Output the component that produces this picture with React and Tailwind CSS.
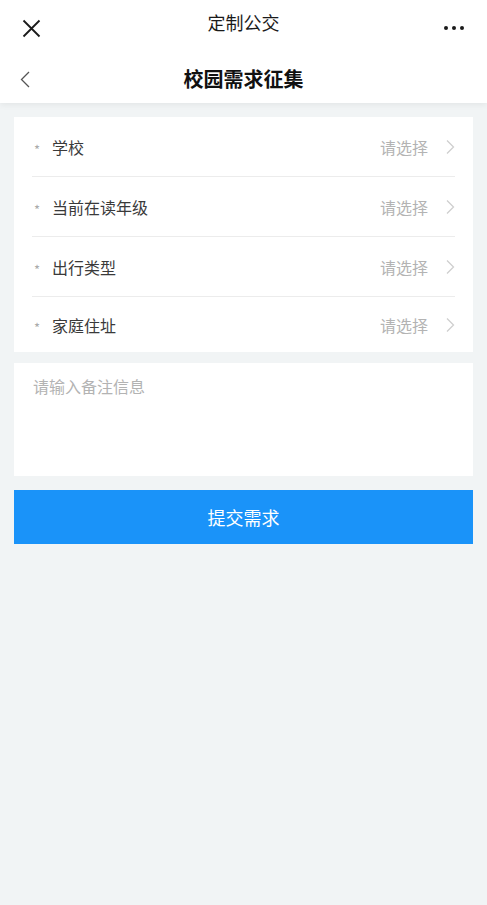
import React from 'react';

const fields = ['学校', '当前在读年级', '出行类型', '家庭住址'];

const ChevronRight = () => (
  <svg width="10" height="16" viewBox="0 0 10 16" fill="none" stroke="#cfcfcf" strokeWidth="1.3">
    <path d="M2 1.5 L8.5 8 L2 14.5" />
  </svg>
);

export default function App() {
  return (
    <div
      className="min-h-[905px] bg-[#f1f4f5] text-[#333]"
      style={{ fontFamily: '"Noto Sans CJK SC", "Noto Sans", sans-serif' }}
    >
      {/* Header */}
      <div className="bg-white shadow-[0_2px_6px_rgba(0,0,0,0.06)]">
        <div className="grid grid-cols-[1fr_auto_1fr] h-[56px] px-[22px]">
          <div className="flex items-center">
            <svg width="19" height="19" viewBox="0 0 19 19" stroke="#1a1a1a" strokeWidth="1.8">
              <path d="M1.5 1.5 L17.5 17.5 M17.5 1.5 L1.5 17.5" />
            </svg>
          </div>
          <div className="pt-[9px] text-[18px] leading-[26px] text-[#1a1a1a]">定制公交</div>
          <div className="flex items-center justify-end">
            <div className="flex gap-[4px] mr-[1px]">
              <span className="w-[4px] h-[4px] rounded-full bg-[#1a1a1a]" />
              <span className="w-[4px] h-[4px] rounded-full bg-[#1a1a1a]" />
              <span className="w-[4px] h-[4px] rounded-full bg-[#1a1a1a]" />
            </div>
          </div>
        </div>
        <div className="grid grid-cols-[1fr_auto_1fr] h-[47px] px-[20px] items-center">
          <div className="flex items-center">
            <svg width="10" height="17" viewBox="0 0 10 17" fill="none" stroke="#555" strokeWidth="1.3">
              <path d="M9 1 L1.5 8.5 L9 16" />
            </svg>
          </div>
          <div className="text-[20px] font-bold leading-[26px] text-[#111] pb-[1px]">校园需求征集</div>
          <div />
        </div>
      </div>

      {/* Content */}
      <div className="px-[14px] pt-[14px]">
        <div className="bg-white">
          {fields.map((f, i) => (
            <div
              key={f}
              className={`mx-[18px] flex items-center ${i < fields.length - 1 ? 'h-[60px] border-b border-[#ececec]' : 'h-[55px]'}`}
            >
              <span className="w-[20px] pl-[2px] text-[13px] leading-none text-[#aaa] translate-y-[3px]">*</span>
              <span className="flex-1 text-[16px] text-[#3a3a3a]">{f}</span>
              <span className="text-[16px] text-[#b3b3b3] mr-[17px]">请选择</span>
              <ChevronRight />
            </div>
          ))}
        </div>

        <div className="bg-white mt-[11px] h-[113px] px-[19px] pt-[11px]">
          <div className="text-[16px] leading-[24px] text-[#b3b3b3]">请输入备注信息</div>
        </div>

        <button className="mt-[14px] w-full h-[54px] bg-[#1a93f9] text-white text-[18px] flex items-center justify-center">
          提交需求
        </button>
      </div>
    </div>
  );
}
